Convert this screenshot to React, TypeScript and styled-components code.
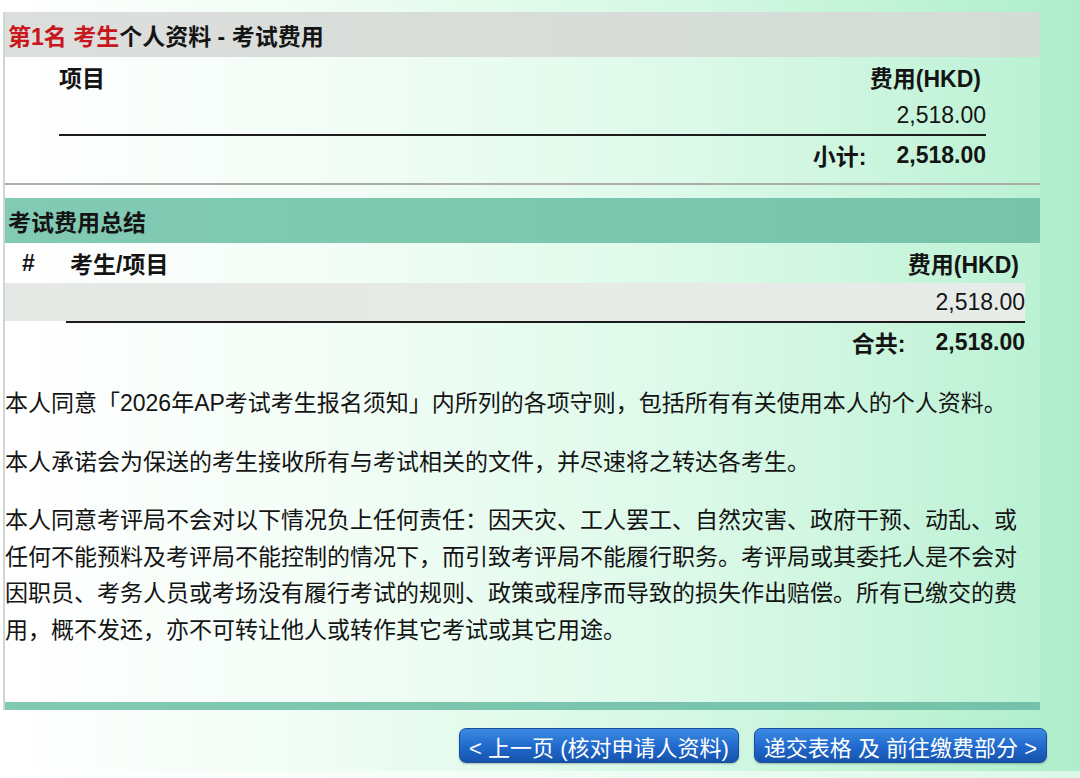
import React from "react";
import styled, { createGlobalStyle } from "styled-components";

const GlobalStyle = createGlobalStyle`
  html, body {
    margin: 0;
    padding: 0;
  }
  body {
    font-family: "Liberation Sans", "Noto Sans CJK SC", sans-serif;
    color: #141414;
  }
`;

const Page = styled.div`
  width: 1080px;
  min-height: 778px;
  box-sizing: border-box;
  padding: 12px 0 0 3px;
  background: linear-gradient(90deg, #ffffff 0%, #effdf4 30%, #d3f8e3 65%, #aeeecb 100%);
  overflow: hidden;
`;

const Panel = styled.div`
  width: 1037px;
  border-left: 2px solid #d2d6d3;
  box-sizing: border-box;
  background: linear-gradient(90deg, rgba(255, 255, 255, 0.3), rgba(255, 255, 255, 0.12));
`;

const SectionHeader = styled.div<{ $tone: "grey" | "teal" }>`
  height: 45px;
  display: flex;
  align-items: center;
  padding-left: 3px;
  font-size: 23px;
  font-weight: 700;
  background: ${(p) =>
    p.$tone === "grey"
      ? "linear-gradient(90deg, #dcdedc, #d4dcd7)"
      : "linear-gradient(90deg, #82cab3, #77c4ab)"};
`;

const Red = styled.span`
  color: #c8161d;
`;

const FeeSection = styled.div`
  border-bottom: 2px solid #acaeac;
  padding: 0 54px 9px 54px;
`;

const Row = styled.div<{ $h: number; $bold?: boolean }>`
  height: ${(p) => p.$h}px;
  display: flex;
  align-items: center;
  font-size: 23px;
  font-weight: ${(p) => (p.$bold ? 700 : 400)};
`;

const Grow = styled.div`
  flex: 1;
`;

const Rule = styled.div<{ $left?: number }>`
  height: 2px;
  background: #1c1c1c;
  margin-left: ${(p) => p.$left ?? 0}px;
`;

const Label = styled.span`
  margin-right: 30px;
`;

const RightHead = styled.span<{ $pad: number }>`
  padding-right: ${(p) => p.$pad}px;
`;

const SummarySection = styled.div`
  margin-top: 13px;
`;

const SummaryBody = styled.div`
  padding: 0 15px 0 0;
`;

const HashCol = styled.div`
  width: 65px;
  padding-left: 17px;
  box-sizing: border-box;
`;

const ShadedRow = styled(Row)`
  background: linear-gradient(90deg, #e5e8e5, #e8ece9);
  justify-content: flex-end;
`;

const Notes = styled.div`
  padding: 24px 12px 0 0;
  font-size: 23px;
  line-height: 36.5px;
`;

const Note = styled.p`
  margin: 0 0 22px 0;
`;

const BottomBar = styled.div`
  height: 8px;
  margin-top: 54px;
  background: linear-gradient(90deg, #82c9b2, #74c2a9);
`;

const ButtonRow = styled.div`
  display: flex;
  justify-content: flex-end;
  gap: 15px;
  padding-right: 33px;
  margin-top: 18px;
`;

const NavButton = styled.button`
  height: 35px;
  padding: 0 9px;
  border: 1px solid #1b4f9e;
  border-radius: 7px;
  background: linear-gradient(180deg, #3b8be3 0%, #2068cc 55%, #1553ab 100%);
  box-shadow: 0 1px 2px rgba(0, 0, 0, 0.25);
  color: #ffffff;
  font-family: "Liberation Sans", "Noto Sans CJK SC", sans-serif;
  font-size: 22px;
  white-space: pre;
  cursor: pointer;
`;

const Footer = styled.div`
  height: 13px;
  margin-top: 8px;
  background: rgba(255, 255, 255, 0.55);
`;

export default function App() {
  return (
    <>
      <GlobalStyle />
      <Page>
        <Panel>
          <SectionHeader $tone="grey">
            <Red>第1名 考生</Red>个人资料 - 考试费用
          </SectionHeader>
          <FeeSection>
            <Row $h={40} $bold>
              <Grow>项目</Grow>
              <RightHead $pad={5}>费用(HKD)</RightHead>
            </Row>
            <Row $h={37}>
              <Grow />
              2,518.00
            </Row>
            <Rule />
            <Row $h={38} $bold>
              <Grow />
              <Label>小计:</Label>
              2,518.00
            </Row>
          </FeeSection>

          <SummarySection>
            <SectionHeader $tone="teal">考试费用总结</SectionHeader>
            <SummaryBody>
              <Row $h={40} $bold>
                <HashCol>#</HashCol>
                <Grow>考生/项目</Grow>
                <RightHead $pad={6}>费用(HKD)</RightHead>
              </Row>
              <ShadedRow $h={38}>2,518.00</ShadedRow>
              <Rule $left={61} />
              <Row $h={38} $bold>
                <Grow />
                <Label>合共:</Label>
                2,518.00
              </Row>
            </SummaryBody>
          </SummarySection>

          <Notes>
            <Note>本人同意「2026年AP考试考生报名须知」内所列的各项守则，包括所有有关使用本人的个人资料。</Note>
            <Note>本人承诺会为保送的考生接收所有与考试相关的文件，并尽速将之转达各考生。</Note>
            <Note>
              本人同意考评局不会对以下情况负上任何责任：因天灾、工人罢工、自然灾害、政府干预、动乱、或任何不能预料及考评局不能控制的情况下，而引致考评局不能履行职务。考评局或其委托人是不会对因职员、考务人员或考场没有履行考试的规则、政策或程序而导致的损失作出赔偿。所有已缴交的费用，概不发还，亦不可转让他人或转作其它考试或其它用途。
            </Note>
          </Notes>
          <BottomBar />
        </Panel>

        <ButtonRow>
          <NavButton>{"< 上一页 (核对申请人资料)"}</NavButton>
          <NavButton>{"递交表格 及 前往缴费部分 >"}</NavButton>
        </ButtonRow>
        <Footer />
      </Page>
    </>
  );
}
